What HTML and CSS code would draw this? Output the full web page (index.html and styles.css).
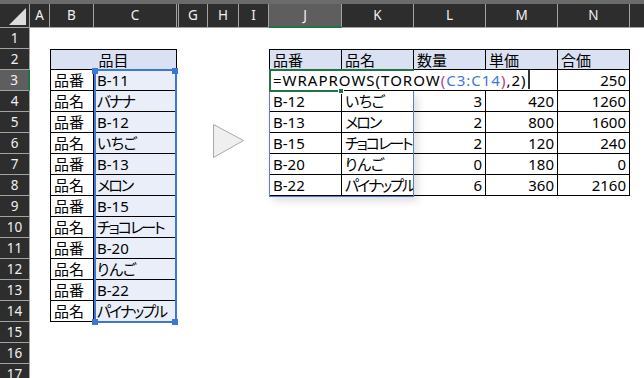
FILE: index.html
```html
<!DOCTYPE html>
<html lang="ja">
<head>
<meta charset="utf-8">
<link rel="stylesheet" href="styles.css">
</head>
<body>
<div class="topbar"></div>
<div class="sheet">
  <div class="corner"><svg width="29" height="23" viewBox="0 0 29 23"><polygon points="9,21 26,21 26,4" fill="#dcdcdc"/></svg></div>
  <div class="ch">A</div>
  <div class="ch">B</div>
  <div class="ch">C</div>
  <div class="ch"></div>
  <div class="ch">G</div>
  <div class="ch">H</div>
  <div class="ch">I</div>
  <div class="ch sel">J</div>
  <div class="ch">K</div>
  <div class="ch">L</div>
  <div class="ch">M</div>
  <div class="ch">N</div>
  <div class="ch last"></div>

  <div class="rh">1</div>
  <div class="rh">2</div>
  <div class="rh sel">3</div>
  <div class="rh">4</div>
  <div class="rh">5</div>
  <div class="rh">6</div>
  <div class="rh">7</div>
  <div class="rh">8</div>
  <div class="rh">9</div>
  <div class="rh">10</div>
  <div class="rh">11</div>
  <div class="rh">12</div>
  <div class="rh">13</div>
  <div class="rh">14</div>
  <div class="rh">15</div>
  <div class="rh">16</div>
  <div class="rh">17</div>

  <div class="tbl t1">
    <div class="c hd span2 jp">品目</div>
    <div class="c jp">品番</div><div class="c ref">B-11</div>
    <div class="c jp">品名</div><div class="c ref jp kk">バナナ</div>
    <div class="c jp">品番</div><div class="c ref">B-12</div>
    <div class="c jp">品名</div><div class="c ref jp hg">いちご</div>
    <div class="c jp">品番</div><div class="c ref">B-13</div>
    <div class="c jp">品名</div><div class="c ref jp kk">メロン</div>
    <div class="c jp">品番</div><div class="c ref">B-15</div>
    <div class="c jp">品名</div><div class="c ref jp kk">チョコレート</div>
    <div class="c jp">品番</div><div class="c ref">B-20</div>
    <div class="c jp">品名</div><div class="c ref jp hg">りんご</div>
    <div class="c jp">品番</div><div class="c ref">B-22</div>
    <div class="c jp">品名</div><div class="c ref jp kk">パイナップル</div>
  </div>

  <div class="tbl t2">
    <div class="c hd jp">品番</div><div class="c hd jp">品名</div><div class="c hd jp">数量</div><div class="c hd jp">単価</div><div class="c hd jp">合価</div>
    <div class="c"></div><div class="c"></div><div class="c n"></div><div class="c n"></div><div class="c n">250</div>
    <div class="c">B-12</div><div class="c jp hg">いちご</div><div class="c n">3</div><div class="c n">420</div><div class="c n">1260</div>
    <div class="c">B-13</div><div class="c jp kk">メロン</div><div class="c n">2</div><div class="c n">800</div><div class="c n">1600</div>
    <div class="c">B-15</div><div class="c jp kk">チョコレート</div><div class="c n">2</div><div class="c n">120</div><div class="c n">240</div>
    <div class="c">B-20</div><div class="c jp hg">りんご</div><div class="c n">0</div><div class="c n">180</div><div class="c n">0</div>
    <div class="c">B-22</div><div class="c jp kk">パイナップル</div><div class="c n">6</div><div class="c n">360</div><div class="c n">2160</div>
  </div>
</div>

<div class="layer">
  <div class="refbox">
    <div class="hdl tl"></div><div class="hdl tr"></div><div class="hdl bl"></div><div class="hdl br"></div>
  </div>
  <svg class="arrow" width="34" height="36" viewBox="0 0 34 36"><polygon points="1.5,1.5 31.5,17.5 1.5,34.5" fill="#efefef" stroke="#a9a9a9" stroke-width="1"/></svg>
  <div class="spill"></div>
  <div class="edit"><span>=WRAPROWS(TOROW</span><span class="pr">(</span><span class="rf">C3:C14</span><span class="pr">)</span><span>,2)</span><span class="cursor"></span></div>
  <div class="active"></div>
  <div class="activetop"></div>
  <div class="fillh"></div>
</div>
</body>
</html>
```

FILE: styles.css
```css
* { box-sizing: border-box; }
html, body { margin: 0; padding: 0; background: #fff; overflow: hidden; }
body {
  position: relative;
  width: 644px;
  height: 378px;
  font-family: "Noto Sans", "Noto Sans CJK JP", sans-serif;
}
.topbar { height: 4px; background: #6b6b6b; }
.sheet {
  display: grid;
  grid-template-columns: 30px 20px 44px 83px 2px 29px 31px 30px 73px 72px 72px 72px 72px 1fr;
  grid-template-rows: 24px repeat(17, 21px);
}
.corner, .ch, .rh {
  background: #2d2d2d;
  border-right: 1px solid #a3a3a3;
  border-bottom: 1px solid #a3a3a3;
  color: #f0f0f0;
  font-size: 13.5px;
  text-align: center;
  overflow: hidden;
}
.corner svg { display: block; }
.ch { line-height: 23px; }
.ch.sel { background: #5e5e5e; border-bottom: 2px solid #217346; line-height: 22px; }
.ch.last { border-right: none; }
.rh { grid-column: 1; line-height: 20px; }
.rh.sel { background: #5e5e5e; border-right: 2px solid #217346; }

.tbl {
  display: grid;
  border-left: 1px solid #000;
  border-top: 1px solid #000;
  font-size: 15px;
  color: #000;
}
.t1 {
  grid-column: 3 / 5;
  grid-row: 3 / 16;
  grid-template-columns: 43px 83px;
  grid-template-rows: 20px repeat(12, 21px);
}
.t2 {
  grid-column: 9 / 14;
  grid-row: 3 / 10;
  grid-template-columns: repeat(5, 72px);
  grid-template-rows: 20px repeat(6, 21px);
}
.c {
  border-right: 1px solid #000;
  border-bottom: 1px solid #000;
  padding: 1px 3px 0 3px;
  line-height: 19px;
  white-space: nowrap;
  overflow: hidden;
}
.jp {
  font-family: "Noto Sans CJK JP", sans-serif;
  font-feature-settings: "palt" 1;
  line-height: 18px;
  padding-top: 1px;
}
.kk { letter-spacing: -2px; }
.hg { letter-spacing: -0.4px; }
.hd { background: #d9e1f2; }
.span2 { grid-column: span 2; text-align: center; }
.n { text-align: right; }
.ref { background: #e9eef8; }

.layer {
  position: absolute;
  left: 0;
  top: 0;
  width: 644px;
  height: 378px;
  pointer-events: none;
}
.refbox {
  position: absolute;
  left: 94px;
  top: 69px;
  width: 83px;
  height: 254px;
  border: 2px solid #3a78d4;
}
.hdl { position: absolute; width: 6px; height: 6px; background: #3a78d4; }
.tl { left: -4px; top: -3px; }
.tr { right: -3px; top: -3px; }
.bl { left: -4px; bottom: -4px; }
.br { right: -3px; bottom: -4px; }

.arrow { position: absolute; left: 212px; top: 123px; }

.spill {
  position: absolute;
  left: 269px;
  top: 91px;
  width: 145px;
  height: 106px;
  border: 1px solid #4f82d6;
  border-top: none;
  box-shadow: 4px 4px 8px rgba(0, 0, 0, 0.13);
}
.edit {
  position: absolute;
  left: 270px;
  top: 70px;
  width: 260px;
  height: 20px;
  background: #fff;
  padding-left: 3px;
  font-size: 15px;
  line-height: 20px;
  letter-spacing: 1px;
  white-space: nowrap;
  color: #000;
}
.pr { color: #b0408e; }
.rf { color: #3a78d4; }
.cursor {
  display: inline-block;
  width: 2px;
  height: 19px;
  margin-left: 1px;
  background: #333;
  vertical-align: top;
}
.active {
  position: absolute;
  left: 269px;
  top: 69px;
  width: 73px;
  height: 23px;
  border: 2px solid #217346;
  border-right: none;
}
.activetop {
  position: absolute;
  left: 342px;
  top: 69px;
  width: 72px;
  height: 2px;
  background: #217346;
}
.fillh {
  position: absolute;
  left: 338px;
  top: 88px;
  width: 6px;
  height: 6px;
  background: #217346;
  border: 1px solid #fff;
}
```
